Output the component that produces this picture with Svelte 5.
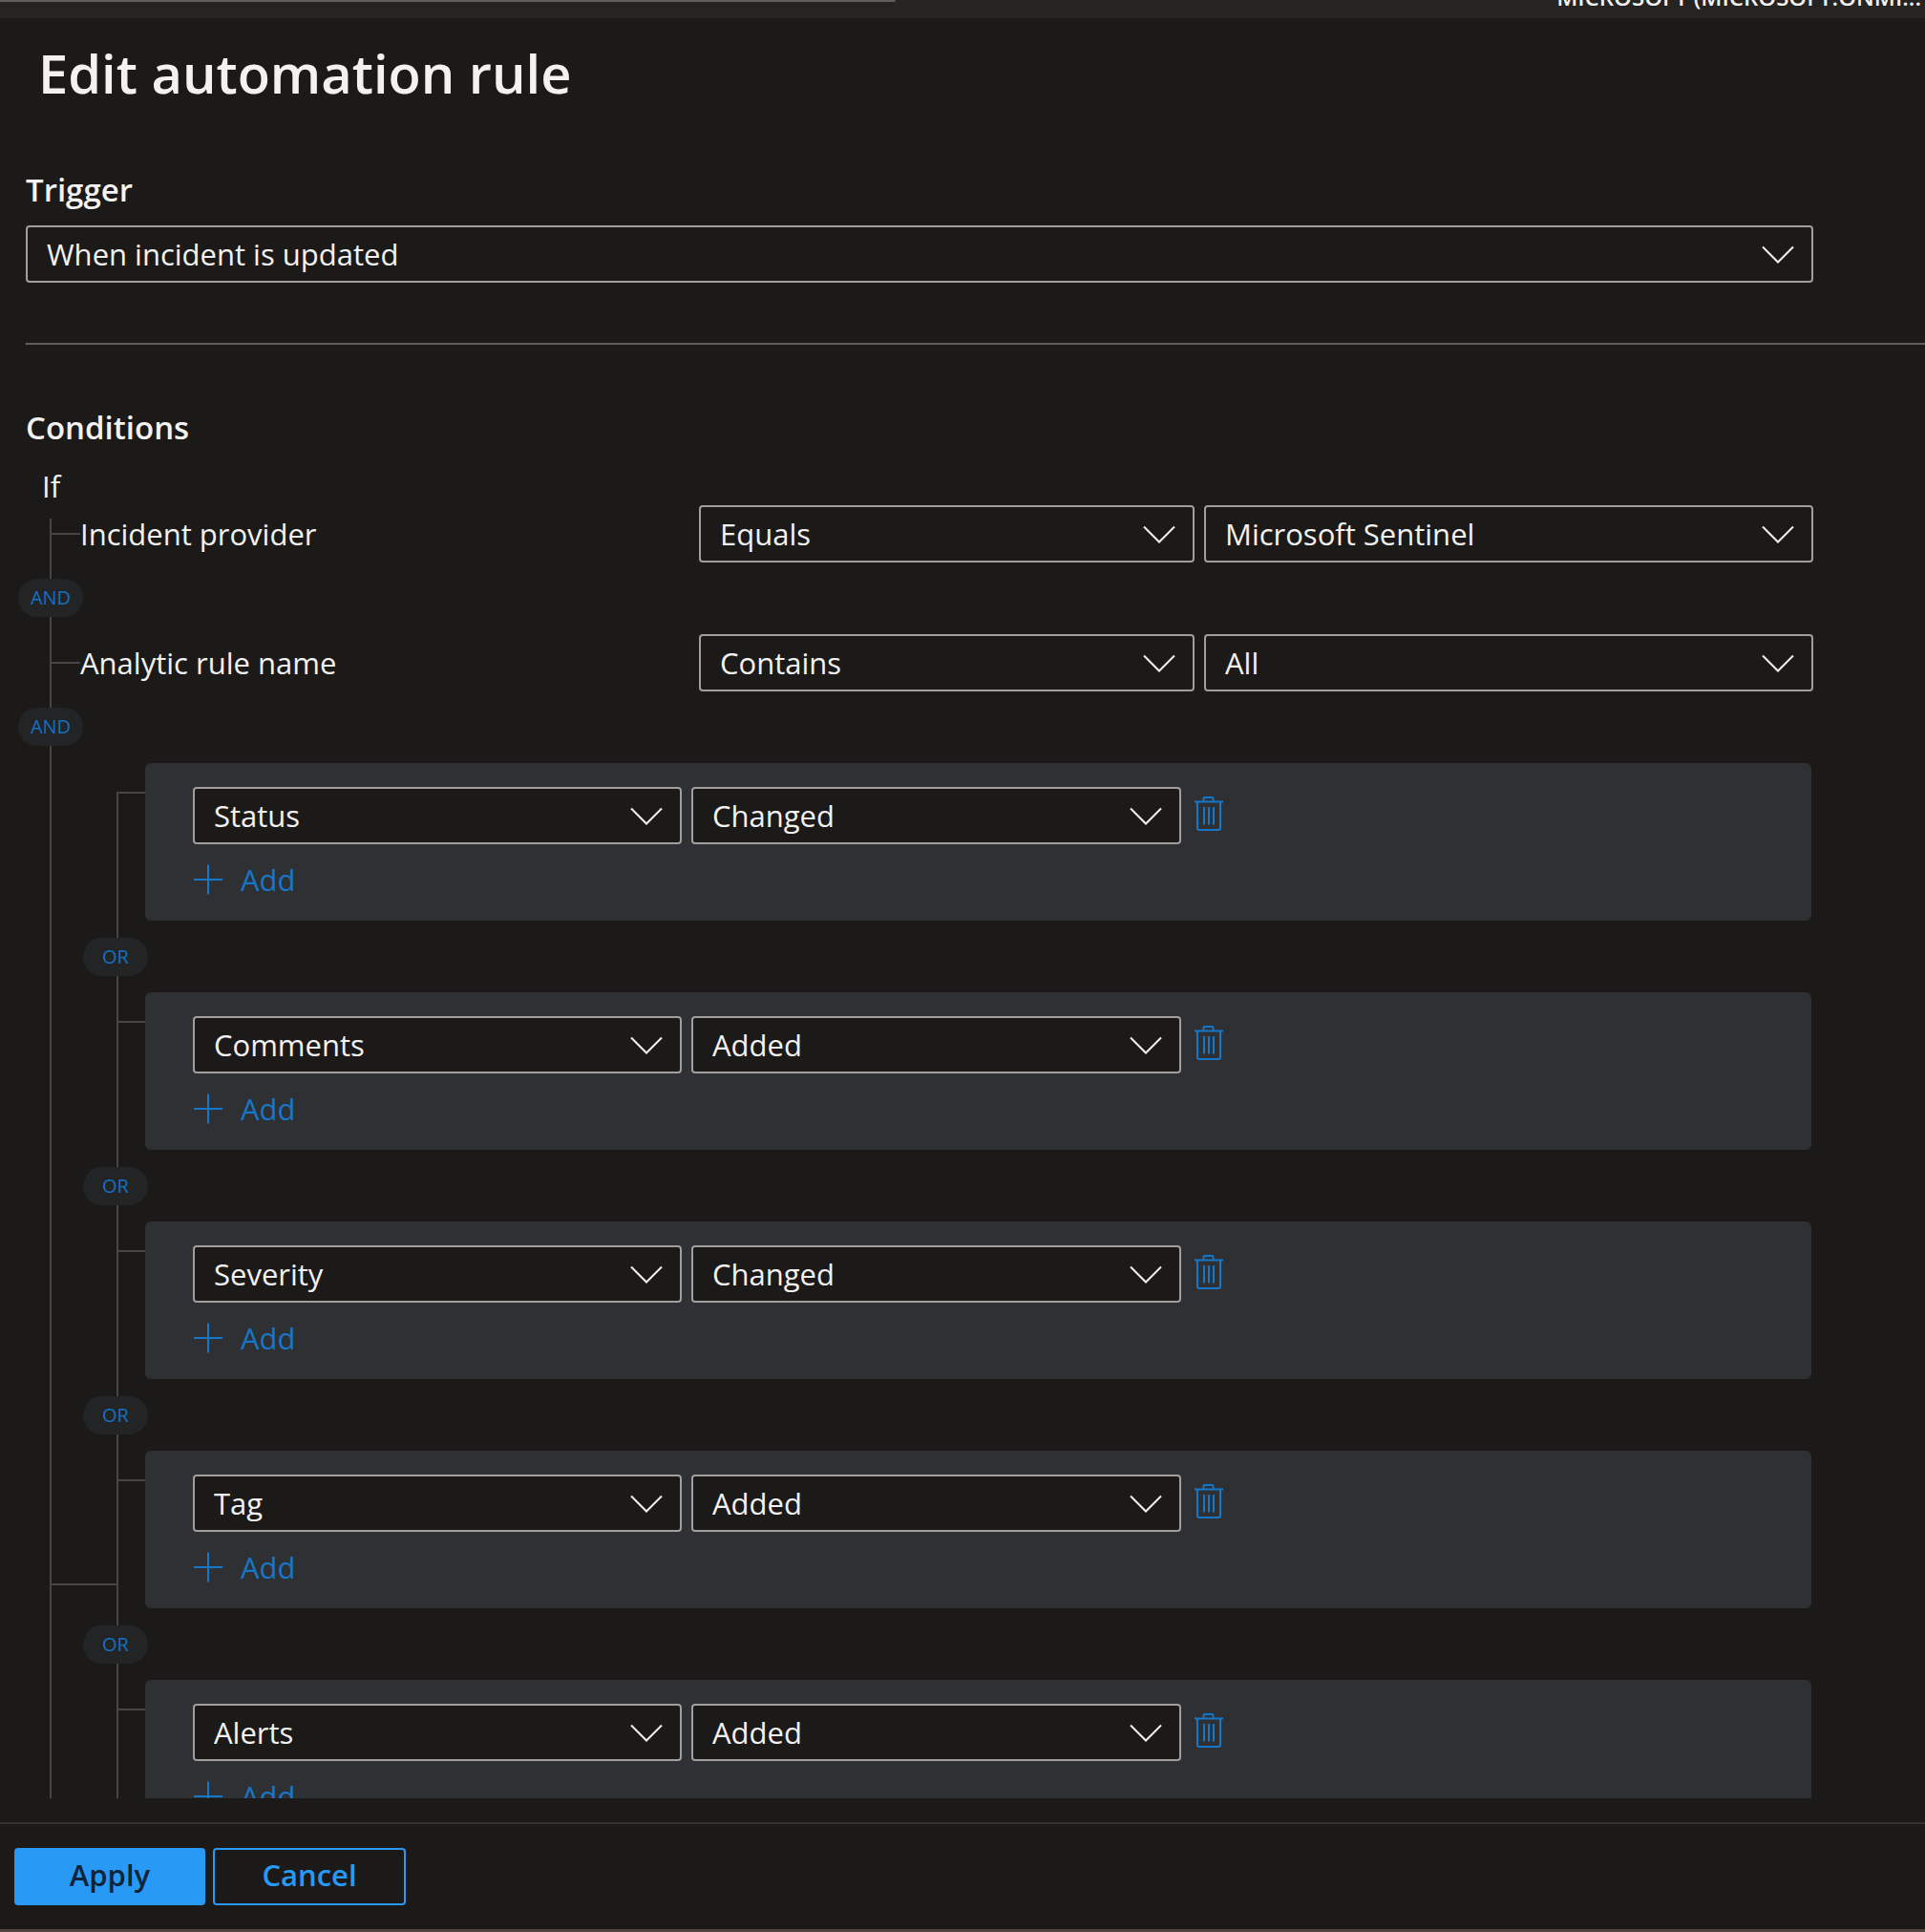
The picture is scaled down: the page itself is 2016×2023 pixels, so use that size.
<script>
  const filters = [
    {
      label: 'Incident provider',
      operator: 'Equals',
      operators: ['Equals', 'Does not equal'],
      value: 'Microsoft Sentinel',
      values: ['Microsoft Sentinel', 'All']
    },
    {
      label: 'Analytic rule name',
      operator: 'Contains',
      operators: ['Contains', 'Does not contain'],
      value: 'All',
      values: ['All']
    }
  ];

  const properties = ['Status', 'Comments', 'Severity', 'Tag', 'Alerts'];
  const changes = ['Changed', 'Added'];

  let groups = $state([
    { property: 'Status', change: 'Changed' },
    { property: 'Comments', change: 'Added' },
    { property: 'Severity', change: 'Changed' },
    { property: 'Tag', change: 'Added' },
    { property: 'Alerts', change: 'Added' }
  ]);

  function remove(index) {
    groups.splice(index, 1);
  }
</script>

{#snippet dropdown(label, value, options, id)}
  <div class="dropdown">
    <select {id} aria-label={id ? undefined : label} {value}>
      {#each options as option}
        <option value={option}>{option}</option>
      {/each}
    </select>
    <svg class="chevron" viewBox="0 0 34 20" aria-hidden="true">
      <path d="M1 1.5 17 17.5 33 1.5" />
    </svg>
  </div>
{/snippet}

<div class="page">
  <div class="topbar">
    <div class="search-edge"></div>
    <span class="tenant">MICROSOFT (MICROSOFT.ONMI...</span>
  </div>

  <h1>Edit automation rule</h1>

  <main>
    <section class="trigger">
      <label class="heading" for="trigger">Trigger</label>
      {@render dropdown('Trigger', 'When incident is updated', ['When incident is created', 'When incident is updated'], 'trigger')}
    </section>

    <hr />

    <section class="conditions">
      <h2 class="heading">Conditions</h2>
      <p class="if">If</p>

      <div class="tree">
        {#each filters as filter}
          <div class="filter">
            <span class="tick"></span>
            <div class="filter-fields">
              <span>{filter.label}</span>
              {@render dropdown(`${filter.label} operator`, filter.operator, filter.operators)}
              {@render dropdown(`${filter.label} value`, filter.value, filter.values)}
            </div>
          </div>
          <div class="joint"><button class="pill">AND</button></div>
        {/each}

        <div class="any-of">
          <div class="branch"></div>
          <div class="groups">
            {#each groups as group, i}
              {#if i > 0}
                <div class="or-joint"><button class="pill">OR</button></div>
              {/if}
              <div class="group">
                <div class="rail" class:first={i === 0}></div>
                <div class="card">
                  <div class="card-fields">
                    {@render dropdown('Property', group.property, properties)}
                    {@render dropdown('Change', group.change, changes)}
                    <button class="remove" aria-label="Delete condition" onclick={() => remove(i)}>
                      <svg viewBox="0 0 32 38" aria-hidden="true">
                        <path d="M1 6.5H31M10.500 6V3Q10.500 2 11.500 2H19.500Q20.500 2 20.500 3V6M4 7V34Q4 36 6 36H26Q28 36 28 34V7M11 12V30.500M16 12V30.500M21 12V30.500" />
                      </svg>
                    </button>
                  </div>
                  <button class="add">
                    <svg viewBox="0 0 32 32" aria-hidden="true"><path d="M1 16H31M16 .5V31.500" /></svg>
                    <span>Add</span>
                  </button>
                </div>
              </div>
            {/each}
          </div>
        </div>
      </div>
    </section>
  </main>

  <footer>
    <button class="action primary">Apply</button>
    <button class="action">Cancel</button>
  </footer>
</div>

<style>
  :global(body) {
    background: #1b1a19;
  }

  .page {
    display: flex;
    flex-direction: column;
    box-sizing: border-box;
    height: 100vh;
    border-bottom: 3px solid #54433f;
    background: #1b1a19;
    color: #f3f2f1;
    font: 31px/40px 'Open Sans', 'Segoe UI', sans-serif;
  }

  .page :is(button, select) {
    box-sizing: border-box;
    margin: 0;
    font: inherit;
    cursor: pointer;
  }

  svg {
    display: block;
    fill: none;
    stroke: currentColor;
    stroke-width: 2;
  }

  .topbar {
    display: flex;
    flex: none;
    align-items: flex-end;
    justify-content: space-between;
    height: 19px;
    padding-right: 4px;
    overflow: hidden;
    background: #252423;
  }

  .search-edge {
    align-self: flex-start;
    width: 938px;
    height: 2px;
    border-bottom-right-radius: 2px;
    background: #605e5c;
  }

  .tenant {
    padding-bottom: 10px;
    font-size: 24px;
    font-weight: 600;
    line-height: 24px;
    white-space: nowrap;
  }

  h1 {
    flex: none;
    margin: 0;
    padding: 17px 40px 34px;
    font-size: 56px;
    font-weight: 600;
    line-height: 80px;
  }

  main {
    flex: 1;
    min-height: 0;
    margin-bottom: 25px;
    padding-top: 29px;
    overflow-y: auto;
    scrollbar-width: none;
  }

  .heading {
    display: block;
    margin: 0;
    font-size: 33px;
    font-weight: 600;
    line-height: 40px;
  }

  .trigger {
    display: grid;
    gap: 17px;
    padding: 0 117px 63px 27px;
  }

  hr {
    height: 2px;
    margin: 0 0 0 27px;
    border: 0;
    background: #605e5c;
  }

  .conditions {
    padding: 67px 117px 40px 27px;
  }

  .if {
    margin: 21px 0 0 17px;
  }

  .dropdown {
    position: relative;
    min-width: 0;
  }

  .dropdown select {
    display: block;
    width: 100%;
    height: 60px;
    padding: 0 60px 0 20px;
    border: 2px solid #a19f9d;
    border-radius: 4px;
    background: #1b1a19;
    color: inherit;
    appearance: none;
  }

  .chevron {
    position: absolute;
    top: 21px;
    right: 20px;
    width: 34px;
    height: 20px;
    pointer-events: none;
  }

  /* The trunk line starts a little below the top of the first row. */
  .tree {
    display: flow-root;
    margin: 14px 0 0 25px;
    border-left: 2px solid #484644;
  }

  .filter {
    display: flex;
    align-items: center;
  }

  .filter:first-child {
    margin-top: -14px;
  }

  .tick {
    flex: none;
    width: 30px;
    height: 2px;
    background: #484644;
  }

  .filter-fields {
    display: grid;
    flex: 1;
    grid-template-columns: 638fr 519fr 638fr;
    gap: 10px;
    align-items: center;
  }

  .pill {
    width: 68px;
    height: 40px;
    padding: 0;
    border: 0;
    border-radius: 20px;
    background: #222426;
    color: #1570c0;
  }

  .page .pill {
    font-size: 20px;
    line-height: 40px;
  }

  .joint {
    display: flex;
    align-items: flex-start;
    height: 58px;
    margin-left: -35px;
    padding-top: 17px;
  }

  .any-of {
    display: flex;
  }

  .branch {
    flex: none;
    width: 68px;
    height: 859px;
    border-bottom: 2px solid #484644;
  }

  .groups {
    flex: 1;
  }

  .or-joint {
    display: flex;
    align-items: center;
    height: 75px;
    border-left: 2px solid #484644;
  }

  .or-joint .pill {
    margin-left: -37px;
  }

  .group {
    display: flex;
    margin-right: 2px;
  }

  .rail {
    flex: none;
    box-sizing: border-box;
    width: 30px;
    padding-top: 30px;
    border-left: 2px solid #484644;
  }

  .rail::before {
    display: block;
    height: 2px;
    background: #484644;
    content: '';
  }

  .rail.first {
    margin-top: 30px;
    padding-top: 0;
  }

  .card {
    flex: 1;
    box-sizing: border-box;
    min-height: 165px;
    padding: 25px 50px 22px;
    border-radius: 6px;
    background: #2f3033;
  }

  .card-fields {
    display: grid;
    grid-template-columns: 512fr 513fr 600fr;
    gap: 10px;
  }

  .remove {
    justify-self: start;
    height: 60px;
    padding: 0 3px;
    border: 0;
    background: none;
    color: #1577c8;
  }

  .remove svg {
    width: 32px;
    height: 38px;
    margin-bottom: 4px;
  }

  .add {
    display: flex;
    gap: 18px;
    align-items: center;
    padding: 0;
    border: 0;
    background: none;
    color: #1577c8;
  }

  .page .add {
    margin-top: 17px;
  }

  .add svg {
    width: 32px;
    height: 32px;
  }

  footer {
    display: flex;
    flex: none;
    gap: 8px;
    padding: 25px 15px;
    border-top: 2px solid #323130;
  }

  .action {
    min-width: 202px;
    height: 60px;
    padding: 0 24px 4px;
    border: 2px solid #2899f5;
    border-radius: 4px;
    background: #1b1a19;
    color: #2899f5;
  }

  .page .action {
    font-weight: 600;
  }

  .primary {
    min-width: 200px;
    background: #2899f5;
    color: #0f2438;
  }
</style>
